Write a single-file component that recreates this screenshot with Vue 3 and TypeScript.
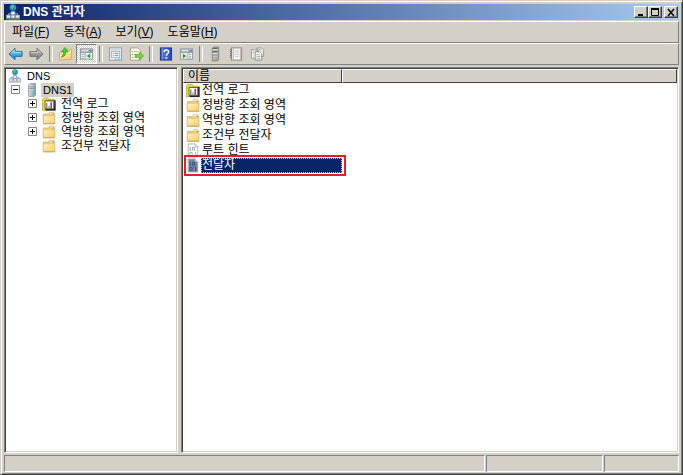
<script setup lang="ts">
import { ref } from 'vue'

interface Menu { label: string; key: string }
interface Tool { icon: string; label: string; pressed?: boolean }
interface TreeRow { label: string; icon: string; level: number; toggle?: 'plus' | 'minus'; selected?: boolean; latin?: boolean }
interface Item { label: string; icon: string }

const menus: Menu[] = [
  { label: '파일', key: 'F' },
  { label: '동작', key: 'A' },
  { label: '보기', key: 'V' },
  { label: '도움말', key: 'H' },
]

const toolGroups: Tool[][] = [
  [{ icon: 'back', label: '뒤로' }, { icon: 'forward', label: '앞으로' }],
  [{ icon: 'up', label: '한 수준 위로' }, { icon: 'tree-pane', label: '콘솔 트리 표시', pressed: true }],
  [{ icon: 'props', label: '속성' }, { icon: 'export', label: '목록 내보내기' }],
  [{ icon: 'help', label: '도움말' }, { icon: 'action-pane', label: '작업 창 표시' }],
  [{ icon: 'server-gray', label: '새 서버' }, { icon: 'notebook', label: '새 레코드' }, { icon: 'copies', label: '새 영역' }],
]

const tree: TreeRow[] = [
  { label: 'DNS', icon: 'dns', level: 0, latin: true },
  { label: 'DNS1', icon: 'server', level: 1, toggle: 'minus', selected: true, latin: true },
  { label: '전역 로그', icon: 'log', level: 2, toggle: 'plus' },
  { label: '정방향 조회 영역', icon: 'folder', level: 2, toggle: 'plus' },
  { label: '역방향 조회 영역', icon: 'folder', level: 2, toggle: 'plus' },
  { label: '조건부 전달자', icon: 'folder', level: 2 },
]

const items: Item[] = [
  { label: '전역 로그', icon: 'log' },
  { label: '정방향 조회 영역', icon: 'folder' },
  { label: '역방향 조회 영역', icon: 'folder' },
  { label: '조건부 전달자', icon: 'folder' },
  { label: '루트 힌트', icon: 'binary' },
  { label: '전달자', icon: 'binary' },
]

const selected = ref(5)
</script>

<template>
  <svg class="sprite" aria-hidden="true">
    <defs>
      <linearGradient id="g-folder" x1="0" y1="0" x2="1" y2="1">
        <stop offset="0" stop-color="#fff2bf" /><stop offset="1" stop-color="#f2cc6e" />
      </linearGradient>
      <linearGradient id="g-blue" x1="0" y1="0" x2="0" y2="1">
        <stop offset="0" stop-color="#7fd4fa" /><stop offset="1" stop-color="#1583d8" />
      </linearGradient>
      <linearGradient id="g-gray" x1="0" y1="0" x2="0" y2="1">
        <stop offset="0" stop-color="#b4b4b4" /><stop offset="1" stop-color="#7c7c7c" />
      </linearGradient>
      <linearGradient id="g-help" x1="0" y1="0" x2="1" y2="0">
        <stop offset="0" stop-color="#1c3a9c" /><stop offset=".3" stop-color="#4a72e0" /><stop offset="1" stop-color="#2448b8" />
      </linearGradient>
      <linearGradient id="g-server" x1="0" y1="0" x2="1" y2="0">
        <stop offset="0" stop-color="#d3e0e7" /><stop offset="1" stop-color="#8496a1" />
      </linearGradient>
    </defs>
    <symbol id="back" viewBox="0 0 16 16">
      <path d="M1 8 7.500 2v3.500H15v5H7.500V14z" fill="url(#g-blue)" stroke="#1769ae" stroke-linejoin="round" />
      <path d="M3 7.500 6.700 4v2.500H14" fill="none" stroke="#b5e9ff" />
    </symbol>
    <symbol id="forward" viewBox="0 0 16 16">
      <path d="M15 8 8.500 2v3.500H1v5h7.500V14z" fill="url(#g-gray)" stroke="#6c6c6c" stroke-linejoin="round" />
      <path d="M2 6.500h7.500V4.500L13 7.500" fill="none" stroke="#cfcfcf" />
    </symbol>
    <symbol id="up" viewBox="0 0 16 16">
      <path d="M1.500 6.500 8 5l1-1.500h5.500v10L1.500 14.500z" fill="url(#g-folder)" stroke="#d8ae4e" />
      <path d="M3.500 11.500C7 11 8.700 8 8.500 5.500h2.500L7.500 1 3.500 5.500h2.300C5.800 8 5 10 3.500 11.500z" fill="#45cc30" stroke="#23901b" stroke-width=".6" />
    </symbol>
    <symbol id="tree-pane" viewBox="0 0 16 16">
      <rect x="1.500" y="2.500" width="13" height="11" fill="#fafafa" stroke="#8e969c" />
      <path d="M2 3h12v3H2z" fill="#9eaab3" /><path d="M3 4.500h7" stroke="#fff" /><path d="M11 4.500h3" stroke="#60758c" />
      <path d="M2 6.500h12M6.500 7v6" stroke="#8e969c" /><path d="M3 8.500h2M3 10.500h2M3 12.500h2" stroke="#7b9cb8" />
      <path d="m12 7.500-4 2.700 4 2.700z" fill="#20ad20" />
    </symbol>
    <symbol id="action-pane" viewBox="0 0 16 16">
      <rect x="1.500" y="2.500" width="13" height="11" fill="#fafafa" stroke="#8e969c" />
      <path d="M2 3h12v3H2z" fill="#9eaab3" /><path d="M3 4.500h7" stroke="#fff" /><path d="M11 4.500h3" stroke="#60758c" />
      <path d="M2 6.500h12M9.500 7v6" stroke="#8e969c" /><path d="M11 8.500h2M11 10.500h2M11 12.500h2" stroke="#7b9cb8" />
      <path d="m4 7.500 4 2.700-4 2.700z" fill="#20ad20" />
    </symbol>
    <symbol id="props" viewBox="0 0 16 16">
      <rect x="1.500" y="1.500" width="13" height="13" fill="#f3f5f6" stroke="#90989e" />
      <path d="M3 3.500h10" stroke="#b5c6d2" /><rect x="3.500" y="5.500" width="9" height="6" fill="#fff" stroke="#8aa8bd" />
      <path d="M5 7.500h1M7 7.500h4M5 9.500h1M7 9.500h4" stroke="#6f92ad" /><path d="M7 13.500h2M10 13.500h3" stroke="#3fb8e0" />
    </symbol>
    <symbol id="export" viewBox="0 0 16 16">
      <path d="M1.500 1.500h8l3 3v10h-11z" fill="#fffde9" stroke="#aaa17d" />
      <path d="M3 5.500h1M3 8.500h1M3 11.500h1" stroke="#555" /><path d="M5 5.500h5M5 8.500h3M5 11.500h3" stroke="#a6a694" />
      <path d="M7 8.500h4V6l4.500 4-4.500 4v-2.500H7z" fill="#6ddb34" stroke="#35a01a" stroke-width=".7" />
    </symbol>
    <symbol id="help" viewBox="0 0 16 16">
      <rect x="2.500" y="1.500" width="12" height="13" fill="url(#g-help)" stroke="#20348c" />
      <path d="M4.500 2v12" stroke="#91a9ef" />
      <path d="M6.700 6c0-3 4.600-3 4.600-.2 0 1.700-2.300 1.700-2.300 4" fill="none" stroke="#fff" stroke-width="1.700" /><path d="M8.100 11.200h1.800V13H8.100z" fill="#fff" />
    </symbol>
    <symbol id="server" viewBox="0 0 16 16">
      <path d="m4 2 2-1.500h6V14l-1.500 1.500H4z" fill="url(#g-server)" stroke="#71848f" stroke-width=".7" />
      <path d="M5 3.500h5M5 5.500h5M5 7.500h5" stroke="#eef6fa" /><path d="M5 4.500h5M5 6.500h5" stroke="#6c808c" />
      <path d="M8 12h2v1.500H8z" fill="#42d7dd" />
    </symbol>
    <symbol id="server-gray" viewBox="0 0 16 16">
      <path d="m4.500 2 1.500-1.500h5.500V14L10 15.500H4.500z" fill="#a5a5a3" stroke="#777" stroke-width=".7" />
      <path d="M5 3.500h5M5 7.500h5" stroke="#eee" /><path d="M5 2h5M5 5.500h5" stroke="#555" /><path d="M5 10.500h5M5 12.500h3" stroke="#ccc" />
    </symbol>
    <symbol id="notebook" viewBox="0 0 16 16">
      <rect x="2.500" y="1.500" width="11" height="13" fill="#f5f4f0" stroke="#85837e" />
      <path d="M4.500 2v12M12.500 2v12" stroke="#b0aea9" /><path d="M1 3.500h2M1 5.500h2M1 7.500h2M1 9.500h2M1 11.500h2" stroke="#666" />
      <path d="M6 4.500h5M6 6.500h5M6 8.500h5M6 10.500h5" stroke="#ccc" />
    </symbol>
    <symbol id="copies" viewBox="0 0 16 16">
      <path d="M1.500 3.500h7v9h-7zM7.500 1.500h5l2 2v7h-7z" fill="#eeede9" stroke="#999791" />
      <path d="M5.500 5.500h5l2 2v7h-7z" fill="#f7f6f3" stroke="#8e8c87" />
      <path d="M7 8.500h3M7 10.500h4M7 12.500h4M3 6.500h2M9 3.500h3" stroke="#aaa" />
    </symbol>
    <symbol id="dns" viewBox="0 0 16 16">
      <circle cx="8" cy="3.500" r="3.300" fill="#2783c8" /><path d="M6 1.500 8.500.7l.8 2L7.500 5 5.500 4zM9.500 4l1.500-1-.8 2.700z" fill="#3fd163" />
      <path d="M8 7v3M3.500 11V9.500h9V11" stroke="#8194a0" fill="none" />
      <path d="M6 7.500h4v3.500H6zM1.500 11h4v3h-4zM6 11h4v3H6zM10.500 11h4v3h-4z" fill="#e5edf2" stroke="#8296a5" stroke-width=".8" />
      <path d="M1 15h14" stroke="#9ca9b2" />
    </symbol>
    <symbol id="folder" viewBox="0 0 16 16">
      <path d="M1.500 3.500h6l1-2h5l1 2v11h-13z" fill="#f0d080" stroke="#dcb661" />
      <path d="M9 2.500h4" stroke="#fffbe7" /><path d="M11 3.500h3" stroke="#67a5d8" />
      <path d="M1.500 5.500h13v9h-13z" fill="url(#g-folder)" stroke="#e8c570" /><path d="M2 14.500h13" stroke="#cda850" />
    </symbol>
    <symbol id="log" viewBox="0 0 16 16">
      <path d="M0 3 2 1h5l1 2h7v12H0z" fill="#e9d83f" stroke="#a89b22" stroke-width=".8" />
      <path d="M4 4h11.500v11.500H4z" fill="#222" /><path d="M3.500 4.500h10v9h-10z" fill="#fff" stroke="#555" />
      <path d="M5.500 7v6" stroke="#2432c4" /><path d="M8 10v3" stroke="#23a845" /><path d="M10.500 6v7" stroke="#e11b22" stroke-width="1.700" />
    </symbol>
    <symbol id="binary" viewBox="0 0 16 16">
      <path d="M2.500.5h8l3 3v12h-11z" fill="var(--paper, #fff)" stroke="#a9b0ba" /><path d="M10.500.5v3h3" fill="#eef1f4" stroke="#a9b0ba" />
      <path d="M5 4v4M4 4.500h1M4 7.500h2M11 9.500v4M10 10h1M10 13.500h2" stroke="var(--digit, #8f97a1)" stroke-width=".8" fill="none" />
      <rect x="7.500" y="4.500" width="2.500" height="3" fill="none" stroke="var(--digit, #8f97a1)" stroke-width=".8" />
      <rect x="4.500" y="10" width="2.500" height="3.500" fill="none" stroke="var(--digit, #8f97a1)" stroke-width=".8" />
    </symbol>
  </svg>

  <main class="window">
    <header class="titlebar">
      <svg class="icon"><use href="#dns" /></svg>
      <h1>DNS 관리자</h1>
      <div class="controls">
        <button type="button" aria-label="최소화"><svg viewBox="0 0 10 9"><path d="M2 7h5" stroke="#000" stroke-width="2" /></svg></button>
        <button type="button" aria-label="최대화"><svg viewBox="0 0 10 9"><path d="M1.500 1.500h7v6h-7z" fill="none" stroke="#000" /><path d="M1 1h8" stroke="#000" stroke-width="2" /></svg></button>
        <button type="button" class="close" aria-label="닫기"><svg viewBox="0 0 10 9"><path d="m2 1 6 7M8 1 2 8" stroke="#000" stroke-width="1.500" /></svg></button>
      </div>
    </header>

    <nav class="bar menubar">
      <button v-for="m in menus" :key="m.key" type="button">{{ m.label }}(<u>{{ m.key }}</u>)</button>
    </nav>

    <div class="bar toolbar" role="toolbar">
      <div v-for="(group, g) in toolGroups" :key="g" class="group">
        <button v-for="t in group" :key="t.icon" type="button" :class="{ pressed: t.pressed }" :aria-label="t.label">
          <svg class="icon"><use :href="'#' + t.icon" /></svg>
        </button>
      </div>
    </div>

    <div class="content">
      <ul class="pane tree" role="tree">
        <li v-for="row in tree" :key="row.label" role="treeitem" :class="['level' + row.level, { latin: row.latin }]">
          <span v-if="row.level" class="toggle-slot">
            <button v-if="row.toggle" type="button" class="toggle" :aria-label="row.label">
              <svg viewBox="0 0 9 9"><path d="M.5.5h8v8h-8z" fill="#fff" stroke="#848484" /><path :d="row.toggle === 'plus' ? 'M2 4.500h5M4.500 2v5' : 'M2 4.500h5'" stroke="#000" /></svg>
            </button>
          </span>
          <svg class="icon"><use :href="'#' + row.icon" /></svg>
          <span class="label" :class="{ marked: row.selected }">{{ row.label }}</span>
        </li>
      </ul>

      <div class="pane list">
        <table>
          <thead>
            <tr><th class="name">이름</th><th aria-hidden="true"></th></tr>
          </thead>
          <tbody>
            <tr v-for="(item, i) in items" :key="item.label" :class="{ selected: selected === i }" @click="selected = i">
              <td>
                <div class="cell">
                  <svg class="icon"><use :href="'#' + item.icon" /></svg>
                  <span class="label">{{ item.label }}</span>
                </div>
              </td>
              <td></td>
            </tr>
          </tbody>
        </table>
      </div>
    </div>

    <footer class="status"><span></span><span></span><span></span></footer>
  </main>
</template>

<style>
body { margin: 0; background: #d4d0c8; }
</style>

<style scoped>
* { box-sizing: border-box; }
.sprite { position: absolute; width: 0; height: 0; }
.window {
  display: flex; flex-direction: column; min-height: 100vh; padding: 2px;
  border: 1px solid; border-color: #d4d0c8 #404040 #404040 #d4d0c8;
  box-shadow: inset 1px 1px #fff, inset -1px -1px #808080;
  background: #d4d0c8; color: #000;
  font: 12px/14px "Liberation Sans", "Noto Sans CJK KR", sans-serif;
}
button { font: inherit; color: inherit; padding: 0; border: 0; background: none; }
.icon { width: 16px; height: 16px; flex: none; display: block; }

.titlebar {
  display: flex; align-items: center; gap: 2px; height: 16px; margin: 1px; padding: 0 1px;
  background: linear-gradient(90deg, #0a246a, #a6caf0);
}
h1 { flex: 1; margin: 0; font-size: 12px; line-height: 16px; color: #fff; }
.controls { display: flex; }
.controls button {
  display: grid; place-items: center; width: 14px; height: 12px; background: #d4d0c8;
  border: 1px solid; border-color: #fff #404040 #404040 #fff; box-shadow: inset -1px -1px #808080;
}
.controls svg { width: 10px; height: 9px; }
.controls .close { margin-left: 2px; }

.bar {
  display: flex; align-items: center; margin: 0 1px; border: 1px solid;
  border-color: #fff #808080 #808080 #fff;
}
.menubar { height: 22px; padding: 0 0 0 7px; gap: 14px; }
.toolbar { height: 22px; }
.group { display: flex; }
.group + .group::before {
  content: ""; width: 2px; height: 16px; margin: 2px; border-left: 1px solid #808080; border-right: 1px solid #fff;
}
.toolbar button { display: grid; place-items: center; width: 21px; height: 20px; }
.toolbar .pressed {
  border: 1px solid; border-color: #808080 #fff #fff #808080;
  background: repeating-conic-gradient(#fff 0 25%, #d4d0c8 0 50%) 0 0 / 2px 2px;
}
.toolbar .icon { width: 15px; height: 16px; }

.content { flex: 1; display: flex; gap: 3px; margin: 2px 1px 0; }
.pane {
  background: #fff; border: 1px solid; border-color: #808080 #fff #fff #808080;
  box-shadow: inset 1px 1px #404040, inset -1px -1px #d4d0c8; padding: 1px;
}
.tree { flex: 0 0 174px; margin: 0; list-style: none; }
.tree li { display: flex; align-items: center; height: 14px; white-space: nowrap; }
.tree .icon { width: 14px; height: 14px; margin-right: 5px; }
.tree .level0 { padding-left: 2px; }
.tree .level1 { padding-left: 5px; }
.tree .level2 { padding-left: 22px; }
.tree .level1 .icon { margin-right: 3px; }
.toggle-slot { width: 14px; flex: none; padding-bottom: 1px; }
.toggle, .toggle svg { display: block; width: 9px; height: 9px; }
.latin { font-size: 11px; }
.marked { padding: 0 2px; margin-left: -1px; background: #d4d0c8; }

.list { flex: 1; min-width: 0; }
table { width: 100%; table-layout: fixed; border-collapse: separate; border-spacing: 0; }
th {
  height: 14px; padding: 0 4px; text-align: left; font-weight: 400; line-height: 12px; background: #d4d0c8;
  border: 1px solid; border-color: #fff #404040 #404040 #fff;
}
th.name { width: 159px; }
td { padding: 0; }
.cell { position: relative; display: flex; align-items: center; gap: 1px; height: 15px; padding-left: 3px; }
.cell .icon { width: 14px; height: 15px; }
.cell .label { padding-left: 1px; line-height: 15px; white-space: nowrap; }
.selected .icon { --paper: #7484a6; --digit: #34466f; }
.selected .label { flex: 1; color: #fff; background: #0a246a; outline: 1px dotted #d9c88b; outline-offset: -1px; }
.selected .cell::after {
  content: ""; position: absolute; inset: -3px -4px -3px 1px; border: 2px solid #ec1c24;
}

.status { display: flex; gap: 1px; height: 18px; margin: 1px 1px 0; padding-top: 1px; }
.status span { flex: 0 0 117px; border: 1px solid; border-color: #808080 #fff #fff #808080; }
.status span:first-child { flex: 1; }
.status span:last-child { flex-basis: 75px; }
</style>
